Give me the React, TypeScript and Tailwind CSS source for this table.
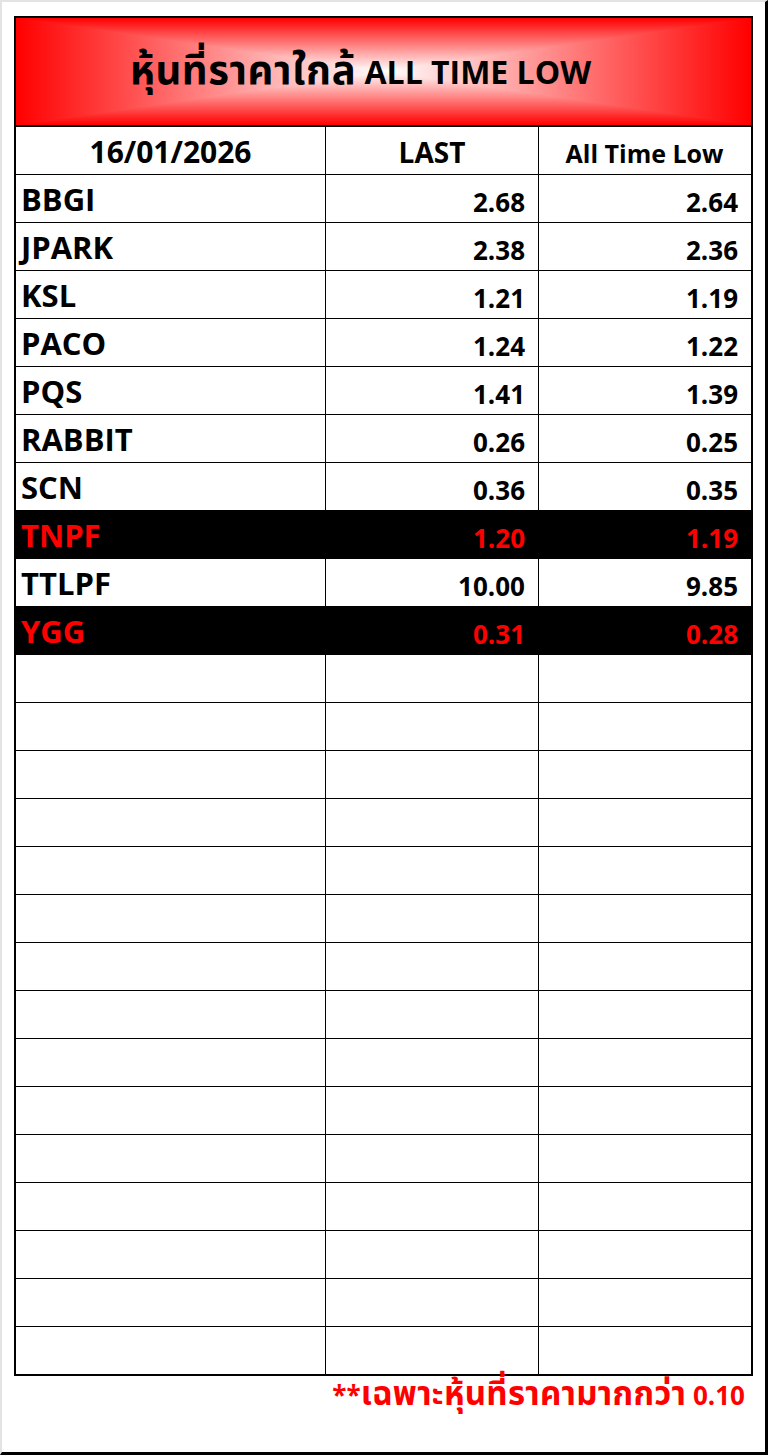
import React from "react";

type Row = { name: string; last: string; atl: string; hl?: boolean };

const rows: Row[] = [
  { name: "BBGI", last: "2.68", atl: "2.64" },
  { name: "JPARK", last: "2.38", atl: "2.36" },
  { name: "KSL", last: "1.21", atl: "1.19" },
  { name: "PACO", last: "1.24", atl: "1.22" },
  { name: "PQS", last: "1.41", atl: "1.39" },
  { name: "RABBIT", last: "0.26", atl: "0.25" },
  { name: "SCN", last: "0.36", atl: "0.35" },
  { name: "TNPF", last: "1.20", atl: "1.19", hl: true },
  { name: "TTLPF", last: "10.00", atl: "9.85" },
  { name: "YGG", last: "0.31", atl: "0.28", hl: true },
];

const FONT = {
  fontFamily:
    '"Open Sans", "Noto Sans Thai", "Noto Sans", "DejaVu Sans", "Noto Sans CJK SC", sans-serif',
};

export default function App() {
  const all: (Row | null)[] = [...rows, ...Array.from({ length: 15 }, () => null)];
  return (
    <div
      className="w-[768px] h-[1455px] bg-white border-l-2 border-t-2 border-r-[3px] border-b-[3px] border-l-[#e3e3e3] border-t-[#e3e3e3] border-r-black border-b-black pl-[12px] pt-[14px] font-bold text-black"
      style={FONT}
    >
      <div className="w-[739px] border-2 border-black">
        <div className="h-[109px] border-b-2 border-black bg-[linear-gradient(to_right,#ff0000_0%,#ffffff_50%,#ff0000_100%),linear-gradient(to_bottom,#ff0000_0%,#ffffff_50%,#ff0000_100%)] bg-blend-darken flex items-baseline justify-center pt-[31px] pr-[46px]">
          <span className="text-[40px] leading-none tracking-[0.6px]">หุ้นที่ราคาใกล้</span>
          <span className="text-[32px] leading-none whitespace-pre"> ALL TIME LOW</span>
        </div>
        <div className="h-[48px] border-b border-black flex">
          <div className="w-[310px] border-r border-black flex justify-center pt-[10px]">
            <span className="text-[30px] leading-none">16/01/2026</span>
          </div>
          <div className="w-[213px] border-r border-black flex justify-center pt-[11px]">
            <span className="text-[28px] leading-none">LAST</span>
          </div>
          <div className="w-[211px] flex justify-center pt-[14px]">
            <span className="text-[25px] leading-none">All Time Low</span>
          </div>
        </div>
        {all.map((r, i) => (
          <div
            key={i}
            className={`flex ${i === all.length - 1 ? "h-[47px]" : "h-[48px] border-b border-black"} ${
              r?.hl ? "bg-black text-[#ff0000]" : "bg-white text-black"
            }`}
          >
            <div className="w-[310px] border-r border-black pl-[5px] pt-[9px]">
              <span className="text-[31px] leading-none">{r?.name ?? ""}</span>
            </div>
            <div className="w-[213px] border-r border-black flex justify-end pr-[13px] pt-[14px]">
              <span className="text-[26px] leading-none">{r?.last ?? ""}</span>
            </div>
            <div className="w-[211px] flex justify-end pr-[12px] pt-[14px]">
              <span className="text-[26px] leading-none">{r?.atl ?? ""}</span>
            </div>
          </div>
        ))}
      </div>
      <div className="w-[739px] flex items-baseline justify-end pr-[8px] pt-0 text-[#ff0000]">
        <span className="text-[26px] leading-none">**</span>
        <span className="text-[33px] leading-none tracking-[0.3px]">เฉพาะหุ้นที่ราคามากกว่า</span>
        <span className="text-[26px] leading-none whitespace-pre"> 0.10</span>
      </div>
    </div>
  );
}
